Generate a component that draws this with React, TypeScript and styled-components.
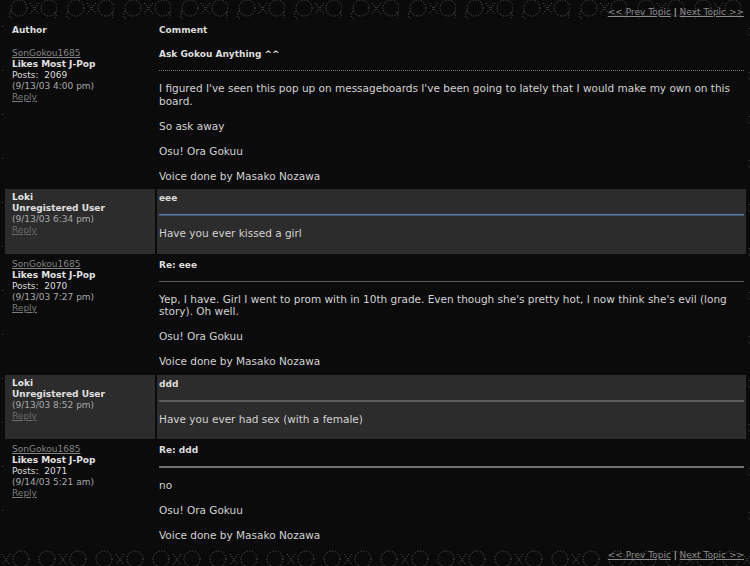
import React from "react";
import styled, { createGlobalStyle } from "styled-components";

const doodle = `<svg xmlns='http://www.w3.org/2000/svg' width='57' height='44'><g fill='none' stroke='#5e5e5e' stroke-width='1' stroke-dasharray='1 1.7'><circle cx='19' cy='9' r='8'/><path d='M11 12 q-4 6 2 8'/><path d='M30 4 L39 15 M39 4 L30 15'/><circle cx='49' cy='9' r='8'/><path d='M55 13 q3 5 -2 8'/><circle cx='47' cy='32' r='8'/><path d='M2 27 L10 38 M10 27 L2 38'/><circle cx='21' cy='32' r='8'/></g></svg>`;

const GlobalStyle = createGlobalStyle`
  html, body {
    margin: 0;
    padding: 0;
  }
  body {
    width: 750px;
    height: 566px;
    overflow: hidden;
    background-color: #0a0a0a;
    background-image: url("data:image/svg+xml,${encodeURIComponent(doodle)}");
    background-position: 0 -1px;
    font-family: "DejaVu Sans", Verdana, sans-serif;
    color: #d4d4d4;
  }
`;

const Page = styled.div`
  padding: 6px 2px 0 3px;
`;

const TopicNav = styled.div<{ $bottom?: boolean }>`
  text-align: right;
  font-size: 9px;
  line-height: 12px;
  padding-right: 4px;
  margin-bottom: ${(p) => (p.$bottom ? "0" : "1px")};
  color: #cfcfcf;
`;

const NavLink = styled.a`
  color: #8a8a8a;
  text-decoration: underline;
`;

const Board = styled.div`
  width: 741px;
  padding: 2px;
  background: #0b0b0b;
  display: flex;
  flex-direction: column;
  gap: 2px;
`;

const Row = styled.div`
  display: grid;
  grid-template-columns: 150px 589px;
  gap: 2px;
`;

const AuthorCell = styled.div<{ $alt?: boolean }>`
  background: ${(p) => (p.$alt ? "#2c2c2c" : "transparent")};
  padding: 3px 4px 3px 7px;
  font-size: 9px;
  line-height: 11px;
`;

const CommentCell = styled.div<{ $alt?: boolean; $tail?: boolean }>`
  background: ${(p) => (p.$alt ? "#2c2c2c" : "transparent")};
  padding: 3px 2px ${(p) => (p.$tail ? "14px" : "5px")} 2px;
`;

const HeadLabel = styled.div`
  font-size: 9px;
  line-height: 12px;
  font-weight: bold;
  color: #dcdcdc;
  padding-bottom: 2px;
`;

const UserLink = styled.a`
  display: block;
  color: #858585;
  text-decoration: underline;
`;

const UserName = styled.div`
  font-weight: bold;
  color: #e6e6e6;
`;

const Rank = styled.div`
  font-weight: bold;
  color: #e0e0e0;
`;

const Meta = styled.div<{ $dim?: boolean }>`
  color: ${(p) => (p.$dim ? "#a8a8a8" : "#dcdcdc")};
`;

const ReplyLink = styled.a<{ $alt?: boolean }>`
  display: block;
  color: ${(p) => (p.$alt ? "#6a6a6a" : "#7c7c7c")};
  text-decoration: underline;
`;

const Title = styled.div`
  font-size: 9px;
  line-height: 12px;
  font-weight: bold;
  color: #dedede;
`;

type RuleKind = "dotted" | "blue" | "thin" | "thick" | "light";

const ruleStyles: Record<RuleKind, string> = {
  dotted: "border-top: 1px dotted #777;",
  blue: "border-top: 1px solid #5b7da8; border-bottom: 1px solid #3c5677;",
  thin: "border-top: 1px solid #5a5a5a;",
  thick: "border-top: 2px solid #5e5e5e;",
  light: "border-top: 2px solid #6e6e6e;",
};

const Rule = styled.div<{ $kind: RuleKind }>`
  margin: 10px 0 11px;
  ${(p) => ruleStyles[p.$kind]}
`;

const Body = styled.div`
  font-size: 10.5px;
  line-height: 12.5px;
  color: #d2d2d2;

  p {
    margin: 0 0 12.5px;
  }
  p:last-child {
    margin-bottom: 0;
  }
`;

type Post = {
  user: string;
  registered: boolean;
  posts?: number;
  date: string;
  title: string;
  rule: RuleKind;
  text: string[];
  sig: boolean;
};

const posts: Post[] = [
  {
    user: "SonGokou1685",
    registered: true,
    posts: 2069,
    date: "(9/13/03 4:00 pm)",
    title: "Ask Gokou Anything ^^",
    rule: "dotted",
    text: [
      "I figured I've seen this pop up on messageboards I've been going to lately that I would make my own on this board.",
      "So ask away",
    ],
    sig: true,
  },
  {
    user: "Loki",
    registered: false,
    date: "(9/13/03 6:34 pm)",
    title: "eee",
    rule: "blue",
    text: ["Have you ever kissed a girl"],
    sig: false,
  },
  {
    user: "SonGokou1685",
    registered: true,
    posts: 2070,
    date: "(9/13/03 7:27 pm)",
    title: "Re: eee",
    rule: "thin",
    text: [
      "Yep, I have. Girl I went to prom with in 10th grade. Even though she's pretty hot, I now think she's evil (long story). Oh well.",
    ],
    sig: true,
  },
  {
    user: "Loki",
    registered: false,
    date: "(9/13/03 8:52 pm)",
    title: "ddd",
    rule: "thick",
    text: ["Have you ever had sex (with a female)"],
    sig: false,
  },
  {
    user: "SonGokou1685",
    registered: true,
    posts: 2071,
    date: "(9/14/03 5:21 am)",
    title: "Re: ddd",
    rule: "light",
    text: ["no"],
    sig: true,
  },
];

function Nav({ bottom }: { bottom?: boolean }) {
  return (
    <TopicNav $bottom={bottom}>
      <NavLink href="#">&lt;&lt; Prev Topic</NavLink> | <NavLink href="#">Next Topic &gt;&gt;</NavLink>
    </TopicNav>
  );
}

export default function App() {
  return (
    <Page>
      <GlobalStyle />
      <Nav />
      <Board>
        <Row>
          <AuthorCell>
            <HeadLabel>Author</HeadLabel>
          </AuthorCell>
          <CommentCell>
            <HeadLabel>Comment</HeadLabel>
          </CommentCell>
        </Row>
        {posts.map((post, i) => {
          const alt = !post.registered;
          return (
            <Row key={i}>
              <AuthorCell $alt={alt}>
                {post.registered ? (
                  <>
                    <UserLink href="#">{post.user}</UserLink>
                    <Rank>Likes Most J-Pop</Rank>
                    <Meta>Posts:{"\u00a0"} {post.posts}</Meta>
                  </>
                ) : (
                  <>
                    <UserName>{post.user}</UserName>
                    <Rank>Unregistered User</Rank>
                  </>
                )}
                <Meta $dim>{post.date}</Meta>
                <ReplyLink href="#" $alt={alt}>Reply</ReplyLink>
              </AuthorCell>
              <CommentCell $alt={alt} $tail={!post.sig}>
                <Title>{post.title}</Title>
                <Rule $kind={post.rule} />
                <Body>
                  {post.text.map((t, j) => (
                    <p key={j}>{t}</p>
                  ))}
                  {post.sig && (
                    <>
                      <p>Osu! Ora Gokuu</p>
                      <p>Voice done by Masako Nozawa</p>
                    </>
                  )}
                </Body>
              </CommentCell>
            </Row>
          );
        })}
      </Board>
      <Nav bottom />
    </Page>
  );
}
